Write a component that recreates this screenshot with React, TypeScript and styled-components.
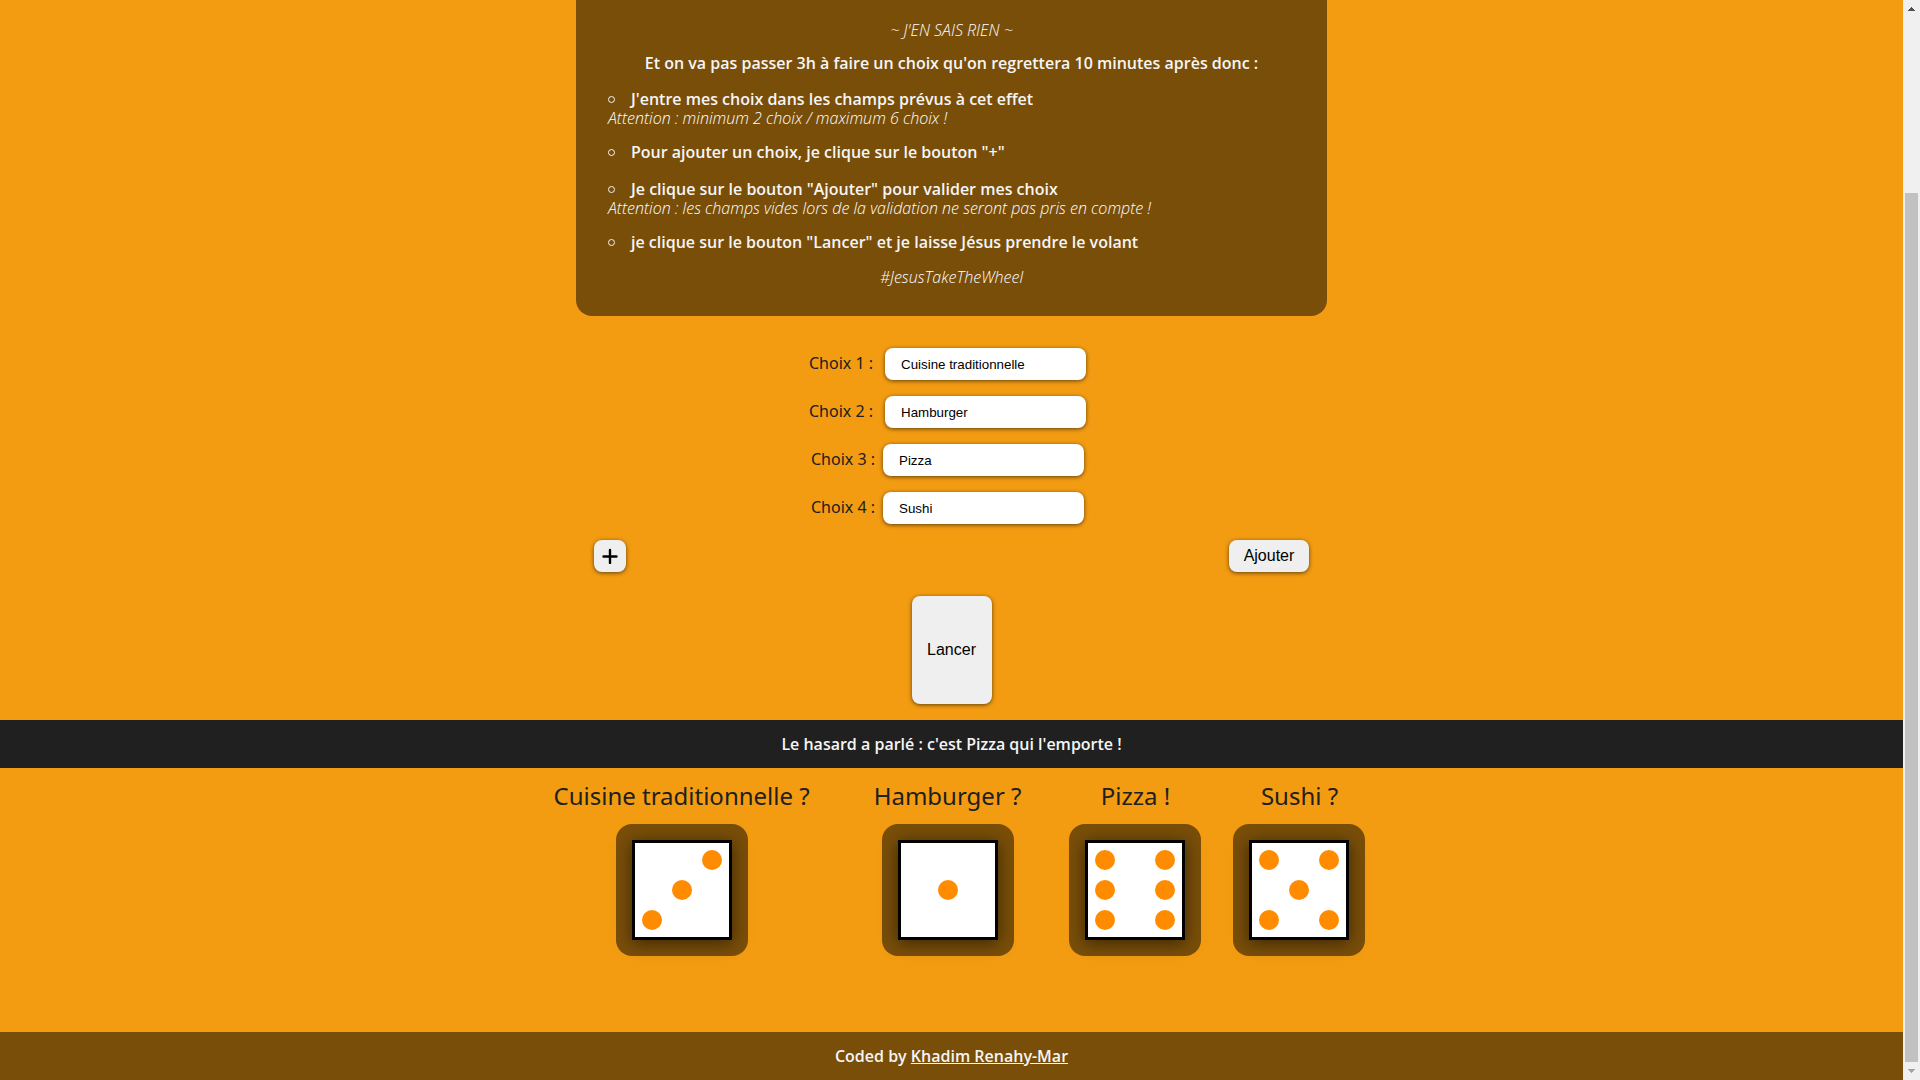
import React, { useState } from "react";
import styled, { createGlobalStyle } from "styled-components";

const GlobalStyle = createGlobalStyle`
  *, *::before, *::after { box-sizing: border-box; }
  body {
    margin: 0;
    background: #f39c12;
    color: #202020;
    font-family: "Open Sans", sans-serif;
    font-size: 16px;
  }
  p, ul, h2 { margin: 0; padding: 0; }
`;

const Shell = styled.div`
  display: grid;
  grid-template-columns: minmax(0, 1fr) 17px;
  min-height: 100vh;
`;

const Page = styled.div`
  display: flex;
  flex-direction: column;
`;

const Main = styled.main`
  flex: 1;
  display: flex;
  flex-direction: column;
  align-items: center;
`;

const Rules = styled.section`
  display: flex;
  flex-direction: column;
  gap: 16px;
  width: 100%;
  max-width: 751px;
  padding: 22px 32px 31px;
  border-radius: 0 0 16px 16px;
  background: #794e09;
  color: #f5f5f5;
  font-weight: 600;
  line-height: 18px;
`;

const Centered = styled.p`
  text-align: center;
`;

const Aside = styled.p<{ $center?: boolean }>`
  color: #fff;
  font-weight: 300;
  font-style: italic;
  line-height: 16px;
  text-align: ${(p) => (p.$center ? "center" : "left")};
`;

const Steps = styled.ul`
  display: flex;
  flex-direction: column;
  gap: 15px;
  list-style: none;
`;

const StepTitle = styled.p`
  display: flex;
  align-items: center;
  gap: 16px;
  line-height: 22px;

  &::before {
    content: "";
    width: 7px;
    height: 7px;
    border: 1px solid #f5f5f5;
    border-radius: 50%;
  }
`;

const Form = styled.form`
  width: 100%;
  max-width: 715px;
  padding: 32px 0 24px;
  display: flex;
  flex-direction: column;
  gap: 16px;
`;

const Field = styled.div<{ $gap: number }>`
  display: flex;
  justify-content: center;
  align-items: center;
  gap: ${(p) => p.$gap}px;
  padding-right: 8px;
  color: #202020;
  font-family: "Noto Sans", sans-serif;

  label { padding-bottom: 2px; }
`;

const TextBox = styled.input`
  width: 201px;
  height: 32px;
  padding: 0 16px;
  border: 0;
  border-radius: 8px;
  background: #fff;
  color: #000;
  font-family: "Liberation Sans", Arial, sans-serif;
  box-shadow: 0 1px 4px rgba(0, 0, 0, 0.6);
`;

const Actions = styled.div`
  display: flex;
  justify-content: space-between;
`;

const Button = styled.button<{ $width: number; $height: number }>`
  display: flex;
  align-items: center;
  justify-content: center;
  width: ${(p) => p.$width}px;
  height: ${(p) => p.$height}px;
  padding: 0;
  border: 0;
  border-radius: 8px;
  background: #efefef;
  color: #000;
  font: 16px "Liberation Sans", Arial, sans-serif;
  box-shadow: 0 1px 4px rgba(0, 0, 0, 0.6);
`;

const Result = styled.p`
  align-self: stretch;
  margin-top: 16px;
  background: #202020;
  color: #f5f5f5;
  font-weight: 600;
  line-height: 48px;
  text-align: center;
`;

const DiceRow = styled.section`
  display: flex;
  justify-content: center;
  gap: 32px;
  padding: 12px 0 76px;
`;

const DieColumn = styled.div`
  display: flex;
  flex-direction: column;
  align-items: center;
  gap: 12px;
`;

const DieName = styled.h2`
  padding: 0 16px;
  font: 400 24px/32px "Noto Sans", sans-serif;
`;

const DieTray = styled.div`
  padding: 16px;
  border-radius: 16px;
  background: #794e09;
`;

const DieFace = styled.div`
  display: grid;
  grid-template-columns: repeat(3, 20px);
  grid-template-rows: repeat(3, 20px);
  gap: 10px;
  padding: 7px;
  border: 3px solid #000;
  background: #fff;
  box-shadow: 0 3px 16px rgba(0, 0, 0, 0.5);
`;

const Pip = styled.span<{ $row: number; $col: number }>`
  grid-row: ${(p) => p.$row};
  grid-column: ${(p) => p.$col};
  border-radius: 50%;
  background: #ff8c00;
`;

const Footer = styled.footer`
  background: #794e09;
  color: #f5f5f5;
  font-weight: 600;
  line-height: 48px;
  text-align: center;

  a { color: inherit; }
`;

const ScrollTrack = styled.div`
  display: grid;
  grid-template-rows: 17px minmax(0, 176fr) minmax(0, 869fr) 18px;
  justify-items: center;
  align-items: center;
  background: #f0f0f0;
`;

const ScrollThumb = styled.div`
  grid-row: 3;
  align-self: stretch;
  width: 13px;
  background: #c1c1c1;
`;

const Arrow = styled.svg<{ $row: number }>`
  grid-row: ${(p) => p.$row};
  display: block;
`;

const PIPS: Record<number, [number, number][]> = {
  1: [[2, 2]],
  3: [[1, 3], [2, 2], [3, 1]],
  5: [[1, 1], [1, 3], [2, 2], [3, 1], [3, 3]],
  6: [[1, 1], [1, 3], [2, 1], [2, 3], [3, 1], [3, 3]],
};

const STEPS = [
  { title: "J'entre mes choix dans les champs prévus à cet effet", note: "Attention : minimum 2 choix / maximum 6 choix !" },
  { title: 'Pour ajouter un choix, je clique sur le bouton "+"' },
  {
    title: 'Je clique sur le bouton "Ajouter" pour valider mes choix',
    note: "Attention : les champs vides lors de la validation ne seront pas pris en compte !",
  },
  { title: 'je clique sur le bouton "Lancer" et je laisse Jésus prendre le volant' },
];

const DICE = [
  { name: "Cuisine traditionnelle ?", value: 3 },
  { name: "Hamburger ?", value: 1 },
  { name: "Pizza !", value: 6 },
  { name: "Sushi ?", value: 5 },
];

export default function App() {
  const [choices, setChoices] = useState(["Cuisine traditionnelle", "Hamburger", "Pizza", "Sushi"]);

  const update = (index: number, value: string) =>
    setChoices(choices.map((c, i) => (i === index ? value : c)));

  const addChoice = () => {
    if (choices.length < 6) setChoices([...choices, ""]);
  };

  return (
    <>
      <GlobalStyle />
      <Shell>
        <Page>
          <Main>
            <Rules>
              <Aside $center>~ J'EN SAIS RIEN ~</Aside>
              <Centered>Et on va pas passer 3h à faire un choix qu'on regrettera 10 minutes après donc :</Centered>
              <Steps>
                {STEPS.map((step) => (
                  <li key={step.title}>
                    <StepTitle>{step.title}</StepTitle>
                    {step.note && <Aside>{step.note}</Aside>}
                  </li>
                ))}
              </Steps>
              <Aside $center>#JesusTakeTheWheel</Aside>
            </Rules>

            <Form onSubmit={(e) => e.preventDefault()}>
              {choices.map((choice, i) => (
                <Field key={i} $gap={i < 2 ? 12 : 8}>
                  <label htmlFor={`choix-${i + 1}`}>Choix {i + 1} :</label>
                  <TextBox
                    id={`choix-${i + 1}`}
                    type="text"
                    value={choice}
                    onChange={(e) => update(i, e.target.value)}
                  />
                </Field>
              ))}
              <Actions>
                <Button type="button" $width={32} $height={32} onClick={addChoice} aria-label="Ajouter un champ">
                  <svg width="16" height="16" viewBox="0 0 16 16" fill="none" stroke="#000" strokeWidth="2.4" strokeLinecap="round">
                    <path d="M8 2v13M1.5 8.5h13" />
                  </svg>
                </Button>
                <Button type="submit" $width={80} $height={32}>Ajouter</Button>
              </Actions>
            </Form>

            <Button type="button" $width={80} $height={108}>Lancer</Button>

            <Result>Le hasard a parlé : c'est Pizza qui l'emporte !</Result>

            <DiceRow>
              {DICE.map((die) => (
                <DieColumn key={die.name}>
                  <DieName>{die.name}</DieName>
                  <DieTray>
                    <DieFace>
                      {PIPS[die.value].map(([row, col]) => (
                        <Pip key={`${row}-${col}`} $row={row} $col={col} />
                      ))}
                    </DieFace>
                  </DieTray>
                </DieColumn>
              ))}
            </DiceRow>
          </Main>

          <Footer>
            Coded by <a href="#">Khadim Renahy-Mar</a>
          </Footer>
        </Page>

        <ScrollTrack aria-hidden="true">
          <Arrow $row={1} width="7" height="4" viewBox="0 0 7 4" fill="#505050"><path d="M3 0h1v1h1v1h1v1h1v1H0V3h1V2h1V1h1z" /></Arrow>
          <ScrollThumb />
          <Arrow $row={4} width="7" height="4" viewBox="0 0 7 4" fill="#a3a3a3"><path d="M0 0h7v1H6v1H5v1H4v1H3V3H2V2H1V1H0z" /></Arrow>
        </ScrollTrack>
      </Shell>
    </>
  );
}
